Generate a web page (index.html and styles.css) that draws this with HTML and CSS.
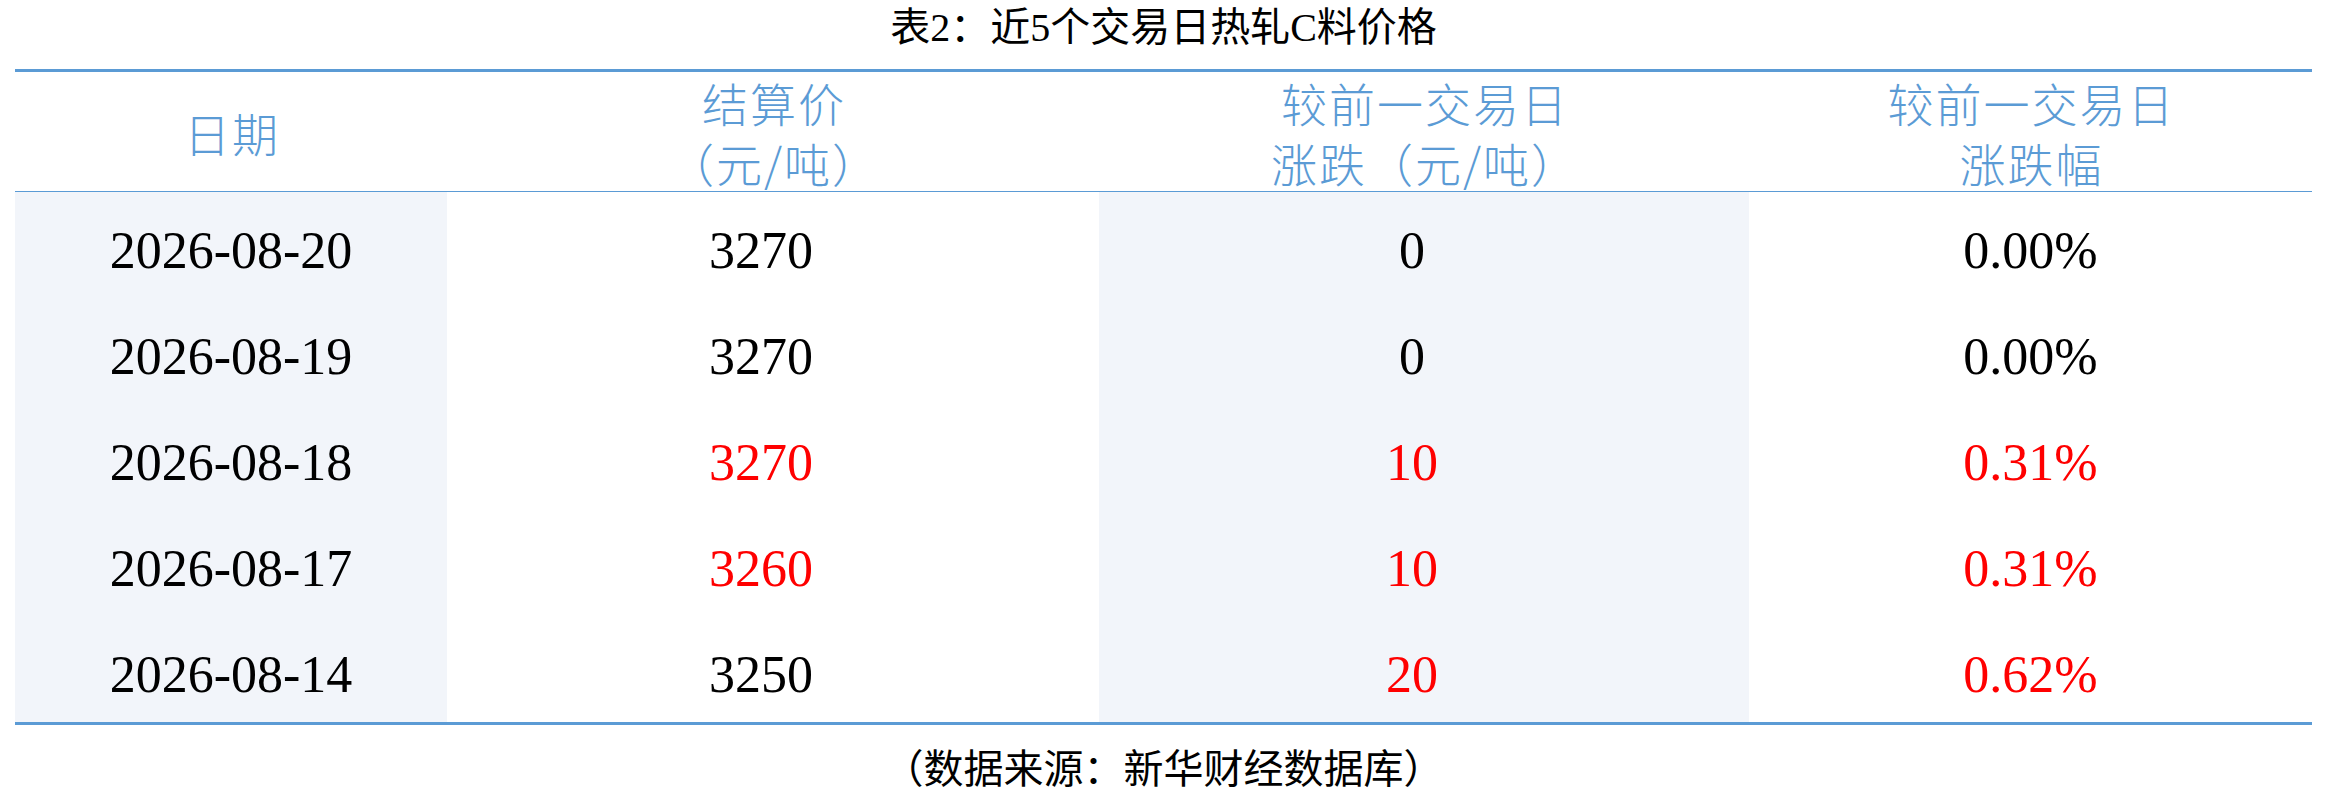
FILE: index.html
```html
<!DOCTYPE html>
<html lang="zh-CN">
<head>
<meta charset="utf-8">
<title>表2：近5个交易日热轧C料价格</title>
<link rel="stylesheet" href="styles.css">
</head>
<body>
<div class="page">
  <h1 class="title">表2：近5个交易日热轧C料价格</h1>
  <div class="table">
    <div class="row head">
      <div class="cell c1"><span>日期</span></div>
      <div class="cell c2"><span>结算价</span><span>（元/吨）</span></div>
      <div class="cell c3"><span>较前一交易日</span><span>涨跌（元/吨）</span></div>
      <div class="cell c4"><span>较前一交易日</span><span>涨跌幅</span></div>
    </div>
    <div class="row body">
      <div class="cell c1">2026-08-20</div>
      <div class="cell c2 num">3270</div>
      <div class="cell c3 num">0</div>
      <div class="cell c4">0.00%</div>
    </div>
    <div class="row body">
      <div class="cell c1">2026-08-19</div>
      <div class="cell c2 num">3270</div>
      <div class="cell c3 num">0</div>
      <div class="cell c4">0.00%</div>
    </div>
    <div class="row body">
      <div class="cell c1">2026-08-18</div>
      <div class="cell c2 num up">3270</div>
      <div class="cell c3 num up">10</div>
      <div class="cell c4 up">0.31%</div>
    </div>
    <div class="row body">
      <div class="cell c1">2026-08-17</div>
      <div class="cell c2 num up">3260</div>
      <div class="cell c3 num up">10</div>
      <div class="cell c4 up">0.31%</div>
    </div>
    <div class="row body last">
      <div class="cell c1">2026-08-14</div>
      <div class="cell c2 num">3250</div>
      <div class="cell c3 num up">20</div>
      <div class="cell c4 up">0.62%</div>
    </div>
  </div>
  <p class="source">（数据来源：新华财经数据库）</p>
</div>
</body>
</html>
```

FILE: styles.css
```css
html, body {
  margin: 0;
  padding: 0;
  background: #ffffff;
}

.page {
  width: 2327px;
  display: flex;
  flex-direction: column;
  align-items: center;
  font-family: "Liberation Serif", "Noto Sans CJK SC", serif;
  color: #000000;
}

.title {
  margin: 0 0 14px 0;
  height: 55px;
  line-height: 55px;
  font-size: 40px;
  font-weight: 400;
  text-align: center;
}

.table {
  width: 2297px;
  border-top: 3px solid #5b9bd5;
  border-bottom: 3px solid #5b9bd5;
}

.row {
  display: grid;
  grid-template-columns: 432px 652px 650px 563px;
}

.head {
  height: 120px;
  box-sizing: border-box;
  border-bottom: 1px solid #5b9bd5;
}

.head .cell {
  display: flex;
  flex-direction: column;
  align-items: center;
  justify-content: center;
  padding-bottom: 4px;
  box-sizing: border-box;
  font-family: "Noto Sans CJK SC", sans-serif;
  font-weight: 300;
  font-size: 46px;
  line-height: 60px;
  letter-spacing: 2px;
  color: #5b9bd5;
}

.head .cell span {
  padding-left: 2px;
}

.body {
  height: 106px;
}

.body .cell {
  display: flex;
  align-items: center;
  justify-content: center;
  padding-top: 12px;
  box-sizing: border-box;
  font-family: "Liberation Serif", serif;
  font-size: 52px;
  line-height: 60px;
}

.body .c1,
.body .c3 {
  background: #f2f5fa;
}

.body .num {
  padding-right: 24px;
}

.up {
  color: #ff0000;
}

.source {
  margin: 14px 0 0 0;
  line-height: 54px;
  font-size: 40px;
  font-family: "Noto Sans CJK SC", sans-serif;
  text-align: center;
}
```
